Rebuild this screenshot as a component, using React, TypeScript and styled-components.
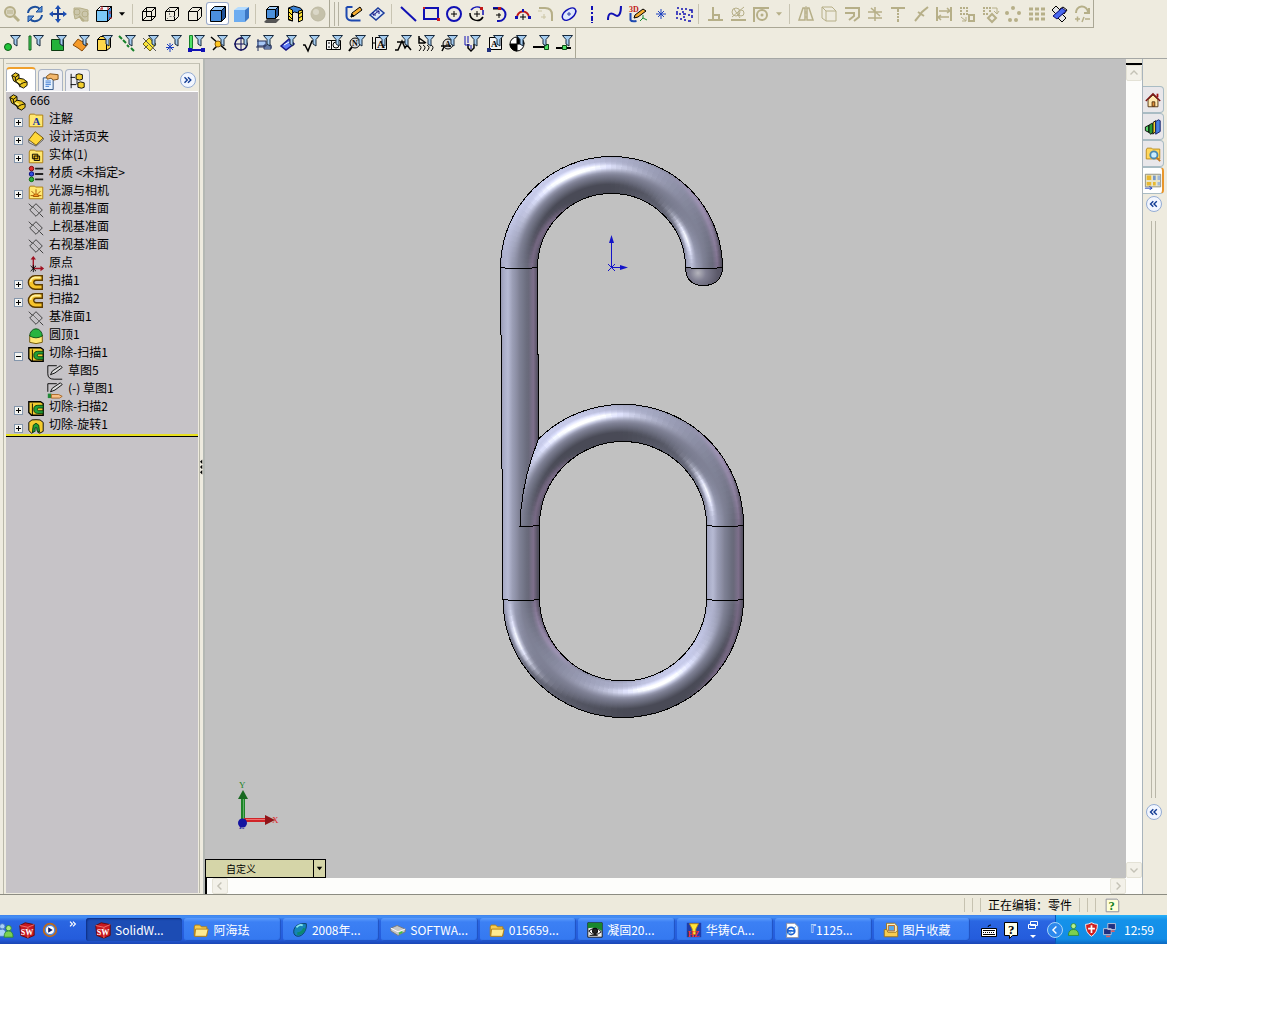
import React from "react";
import styled, { createGlobalStyle, css } from "styled-components";

const GlobalStyle = createGlobalStyle`
  * { box-sizing: border-box; }
  body {
    margin: 0;
    background: #fff;
    font: 12px/18px "Noto Sans CJK SC", "Liberation Sans", sans-serif;
    color: #000;
  }
  button, select { font: inherit; color: inherit; padding: 0; margin: 0; border: 0; background: none; }
  ul { list-style: none; margin: 0; padding: 0; }
`;

/* ---------- icon drawing ---------- */

type Stroke = [d: string, stroke: string, fill?: string, width?: number];
type Glyph = { t: string; x: number; y: number; size: number; color: string };
type Shape = Stroke | Glyph;

const circle = (x: number, y: number, r: number) =>
  `M${x - r} ${y}a${r} ${r} 0 1 0 ${2 * r} 0a${r} ${r} 0 1 0 ${-2 * r} 0z`;

const K = "#000";
const B = "#1010b4";
const G = "#b6af88";
const R = "#c01818";
const none = "none";

const funnel: Shape[] = [["M8.500 2.500h10l-3.500 4v6.500l-3-2v-4.500z", "#16283c", "#a6cdf0"]];
const cube = (front: string, top: string, side: string): Shape[] => [
  ["M2.500 6.500h11v11h-11z", K, front],
  ["M2.500 6.500l4-4h11l-4 4z", K, top],
  ["M13.500 6.500l4-4v11l-4 4z", K, side],
];

const icons: Record<string, Shape[]> = {
  zoom: [[circle(8, 8, 5), G, "#dcd8c4", 2], ["M5 7h6M5 9h6", G], ["M12 12l5 5", G, none, 3]],
  rotate: [
    ["M3 9a7 7 0 0 1 12-4M17 11a7 7 0 0 1-12 4", "#1d4f9c", none, 2],
    ["M17 2v6h-6zM3 18v-6h6z", "#1d4f9c", "#5b94d8"],
  ],
  pan: [["M10 3v14M3 10h14", "#1d3f94", none, 2], ["M10 1l3 4h-6zM10 19l3-4h-6zM1 10l4-3v6zM19 10l-4-3v6z", none, "#1d4fb4"]],
  roll: [["M3 4h6l8 2v11h-6l-2-4-5 2-1-5z", G, "#ccc7ac"], [circle(6, 8, 3), G], [circle(14, 10, 3), G], ["M8 12l5 5", G, none, 2]],
  view: [...cube("#7cc8f8", "#f0f8ff", "#3c8ce0"), ["M8 2v3M6 5h3M14 3v3M16 7v3M15 14h3", R, none, 1]],
  wire: [["M3.500 7.500h9v9h-9zM7.500 3.500h9v9h-9zM3.500 7.500l4-4M12.500 7.500l4-4M12.500 16.500l4-4M3.500 16.500l4-4", K]],
  hidden: [["M3.500 7.500h9v9h-9zM3.500 7.500l4-4h9v9l-4 4M12.500 7.500l4-4", K], ["M7.500 5v2M7.500 9v2M7.500 12.500h2M11 12.500h2M5 15l1-1", "#777"]],
  noline: [["M3.500 7.500h9v9h-9zM3.500 7.500l4-4h9v9l-4 4M12.500 7.500l4-4", K]],
  shadedEdge: cube("#4b8fdc", "#9ccaf8", "#1f5298"),
  shaded: [["M3 6h11v12h-11z", none, "#6cacf0"], ["M3 6l4-3h11l-4 3z", none, "#b4dcff"], ["M14 6l4-3v11l-4 4z", none, "#3d78c4"]],
  shadow: [["M2 18l3-3h13l-4 4h-10z", none, "#555"], ["M4.500 5.500h9v9h-9z", K, "#4b90dc"], ["M4.500 5.500l3-3h9l-3 3z", K, "#a4d0fa"], ["M13.500 5.500l3-3v9l-3 3z", K, "#1f5298"]],
  section: [["M3.500 4l5-2 7 2 2 3v9l-4 1v-8l-4-1-2 1v8l-4-1z", K, "#3b82d4"], ["M3.500 4l4 2v11l-4-2zM13.500 7l4-1v10l-4 2z", K, "#ffe233"], ["M4 8l3 3M4 12l3 3M14 10l3-2M14 14l3-2", K]],
  ball: [[circle(10, 10, 7), "#bdb9a2", "#c5c1aa"], [circle(8, 8, 3), none, "#dad7c7"]],
  sketch: [["M2.500 3v9q0 4 5 4.500h9M2.500 3h6", "#1e49b0", none, 2], ["M7 13l1-4 8-6 2 3-8 6z", K, "#f5ac30"], ["M7 13l1-3 2 2z", K, K]],
  dimension: [["M3 11l8-7 6 5-8 7z", "#1c3c9c", "#dce8f8", 1.500], ["M6 11l6-4M6 11v-3M6 11h3M12 7v3M12 7h-3", "#141484"]],
  line: [["M3 3l15 14", B, none, 2]],
  rect: [["M3 4h14v11h-14z", B, none, 2], ["M16 14h3v3h-3zM2 3h2v2h-2z", none, "#d02020"]],
  circle: [[circle(10, 10, 7), B, none, 2], ["M7 10h6M10 7v6", K]],
  arcCenter: [["M4 6a8 8 0 0 1 10-2M16 6v5", B, none, 1.500], ["M16 13a7 7 0 0 1-13-4", K, none, 1.500], ["M7 10h6M10 7v6", K], ["M13 3h3v3h-3z", none, R]],
  arcTangent: [["M3 4h6a6 6 0 0 1 0 13h-2", B, none, 2], ["M6 11h5M9 9v5M3 5h5", K], ["M8 3h3v3h-3z", none, R]],
  arc3: [["M4 14a6 6 0 0 1 12-1", R, none, 2], ["M7 13h6M10 10v6", K], ["M2 12h3v3h-3zM15 12h3v3h-3zM9 5h2v3h-2z", none, B]],
  fillet: [["M3 4h6q7 0 7 7v6", G, none, 2], ["M5 13h5M8 10v5M2 7h4", "#cbc5a4"]],
  ellipse: [["M4 15c-4-5 8-14 12-10s-7 15-12 10z", B, "#dfe8fc", 1.500], ["M8 10h4M10 8v4", "#3344aa"]],
  centerline: [["M10 2v4M10 8v2M10 12v5M10 18v1", B, none, 2]],
  spline: [["M3 16c0-7 3-8 7-5s6-2 6-9", B, none, 2]],
  sketch3d: [{ t: "3D", x: 1, y: 8, size: 8, color: "#c01818" }, ["M2.500 9v7q1 2 6 1", "#1e49b0", none, 2], ["M6 14l1-3 8-6 3 2-8 6z", K, "#f5ac30"], ["M12 17l3-3 4 2M15 14v-3", "#168a30"]],
  point: [["M10 5v10M5 10h10M7 7l6 6M13 7l-6 6", "#1c40c0"]],
  plane: [["M3 4h2M7 5h2M11 5h2M15 6h3v3M18 11v3M17 17h-3M12 16h-2M8 15h-2M3 15v-2M3 11v-4M5 10h2M9 10h3M14 11h2M9 7v2M10 12v2", B, none, 1.500]],
  perp: [["M3 16h15M8 3v13M8 11h6v5", G, none, 2]],
  relations: [["M3 16h15", G, none, 2], [circle(8, 8, 4), G], [circle(13, 9, 3), G], ["M4 13l12-10M6 5l6 9", G]],
  quick: [["M3 18v-14h15", G, none, 2], [circle(11, 11, 5), G, none, 2], [circle(11, 11, 1.5), none, G]],
  mirror: [["M3 16l4-12h2v12zM17 16l-4-12h-2v12z", G, none, 1.500], ["M10 2v3M10 7v3M10 12v2", G]],
  convert: [["M7 7h10v10h-10zM3 3h10l4 4M3 3v11l4 3M3 3l4 4", G]],
  offset: [["M3 4h14v9l-5 4M3 9h9v3l-5 4", G, none, 2]],
  trim: [["M3 8h14M10 3v14M3 14h14M6 4l9 8", G, none, 1.500]],
  extend: [["M3 4h14", G, none, 2], ["M10 5v3M10 9v2M10 12v2M10 15v3", G, none, 2]],
  split: [["M4 17l5-6 2-3 6-5M7 8l6 4", G, none, 2]],
  linear: [["M3 3v14M17 3v14", G, none, 2], ["M5 7h10M5 13h10M13 4l3 3-3 2M7 11l-3 2 3 3", G, none, 1.500]],
  patternA: [["M3 4h2M6 4h2M9 4h2M3 7h2M9 7h2M3 10h2M6 10h2M9 10h2", G, none, 2], ["M12 11h5v6h-5z", G, none, 2], ["M4 13l5 4v-4M9 17h-4", G]],
  patternB: [["M3 4h2M6 4h2M9 4h2M3 7h2M9 7h2M3 10h2M6 10h2", G, none, 2], ["M12 10l4 4-4 4-4-4z", G, none, 2], ["M12 4h5v5M14 7l3 3 2-3", G]],
  circular: [[circle(10, 4, 2), none, G], [circle(4, 9, 2), none, G], [circle(16, 9, 2), none, G], [circle(7, 16, 2), none, G], [circle(13, 16, 2), none, G]],
  grid: [["M3 5h4M9 5h4M15 5h4M3 10h4M9 10h4M15 10h4M3 15h4M9 15h4M15 15h4", G, none, 3]],
  move: [["M3 6l4-4 4 4-4 4zM9 14l4 4 4-4-4-4zM11 5l3-2 4 3-3 4z", K, "#e6e6e6"], ["M4 12l9-8 4 3-9 8z", "#101074", "#4868f0"]],
  modify: [["M4 9a6 6 0 0 1 12-1M17 4v5h-5", G, none, 2], ["M3 15h5M5.500 12.500v5M12 13l-2 5M13 15h5", G, none, 1.500]],

  fVertex: [[circle(6, 14, 3.500), "#0a5a14", "#22c43a"], ...funnel],
  fEdge: [["M4 3h2v14h-2z", "#0a5a14", "#4fe066"], ...funnel],
  fFace: [["M3.500 6.500h12v11h-12z", "#0a3a10", "#22b23a"], ...funnel],
  fSurface: [["M2 12l5-6 3 2 7 3-6 7-4-3z", "#8a4a08", "#f59a28"], ...funnel],
  fSolid: [["M3.500 6.500h9v11h-9zM3.500 6.500l3-3h11l-5 3zM12.500 6.500l4-3v11l-4 3z", K, "#ffd84a"], ...funnel],
  fAxis: [["M2 3l3 3M6 7l3 3M10 12l2 2M14 15l3 3", "#16802a", none, 2], ...funnel],
  fPlane: [["M3 11l6-6 7 6-6 7z", "#6a6010", "#fbe63a"], ["M3 5l13 13M4 16l4-4", "#555"], ...funnel],
  fPoint: [["M7 10v9M3 14.500h8M4 11l6 6M10 11l-6 6", "#1c40c0"], ...funnel],
  fSketch: [["M3.500 2.500h3v13h-3z", "#16802a", "#4fe066"], ["M4 17h12", B, none, 2], ["M2 15h4v4h-4zM15 15h4v4h-4z", none, B], ...funnel],
  fSegment: [["M2 4l15 13M4 17l7-7", K, none, 1.500], [circle(9, 11, 3), "#8a5a08", "#ffc820"], ...funnel],
  fCenter: [[circle(9, 11, 6), "#10105c", none, 1.500], ["M2 11h14M9 4v14", "#10105c"], ...funnel],
  fMid: [["M3 6v12M2 8h9v5h-9M9 12h7v4h-7zM1 14h16", "#24305c", "#a8c8f4"], ...funnel],
  fDim: [["M3 13l8-7 5 5-8 6z", "#141484", "#5f7af4", 1.500], ["M6 12l5-3", "#fff"], ...funnel],
  fFinish: [["M2 12h2l3 6 4-10h3", K, none, 1.500], ...funnel],
  fTol: [["M2.500 7.500h14v9h-14zM7.500 7.500v9", K, "#f4f4f4"], [circle(12, 12, 3), K], ["M4 10h2M4 14h2", K], ...funnel],
  fNote: [[circle(8, 10, 5), K, "#ddd"], ["M5 14l-3 4", K, none, 2], { t: "N", x: 5, y: 13, size: 8, color: "#000" }, ...funnel],
  fDatum: [["M5.500 4.500h11v12h-11zM2.500 4v12M2 10h4", K, "#e8e8e8"], { t: "A", x: 7, y: 15, size: 11, color: "#000" }, ...funnel],
  fWeld: [["M2 17h3l4-9 3 7 2-3 4 5M4 9h8", K, none, 1.500], ...funnel],
  fCosmetic: [["M3 3v7h6M3 5l7 5", K, none, 1.500], ["M3 12q4 2 0 6M7 12q4 2 0 6M11 12q4 2 0 6M15 12q4 2 0 6", K], ...funnel],
  fBalloon: [[circle(9, 11, 5), K, "#ddd"], ["M5 14l-2 4M2 13h10", K, none, 1.500], { t: "A", x: 6, y: 14, size: 8, color: "#000" }, ...funnel],
  fThread: [["M6 11v4l3 3 3-3v-4", K, none, 1.500], ["M3 3v9h5M6 3v7M9 12v4", B], ...funnel],
  fTarget: [["M4.500 4.500h12v12h-12z", K, "#f4f4f4"], { t: "A", x: 6, y: 14, size: 9, color: "#000" }, ["M2 15h4v4h-4z", none, "#203080"], ...funnel],
  fMass: [[circle(9, 11, 7), K, "#fff"], ["M9 4v7h7a7 7 0 0 0-7-7M9 11v7a7 7 0 0 1-7-7z", K, K], ...funnel],
  fRoute: [["M2 14h13", K, none, 2], ["M13.500 11.500h4v5h-4z", "#0a4a14", "#4fe066"], ...funnel],
  fConnect: [["M2 15h15", K, none, 2], ["M8.500 12.500h4v4h-4z", "#0a4a14", "#4fe066"], ...funnel],

  part: [["M2 5l4-3 4 2v4l5 1 4 3v4l-4 3-4-2-2-3-5-3z", K, "#e8c420"], ["M2 5l4 2 4-3M6 7v4l5 4 4-2 4-1M11 15v3M10 8l-4 3", K], ["M8 11l4 2", "#fff27a", none, 2]],
  property: [["M2.500 6.500h11v13h-11z", "#23487c", "#e6f2ff"], ["M5 10h6M5 12h6M5 14h6M5 16h4", "#3a78d0"], ["M6 5l4-3 9 1v5l-5 1-3-2-4 1z", "#7a4a10", "#f3b76c"]],
  config: [["M3.500 2v16M3 6h5M3 14h6M10 9v5", K, none, 1], ["M9 3l3-1 4 1v5l-3 1-4-1zM11 12l3-1 4 1v5l-3 1-4-1z", K, "#f4d030"]],
  folderA: [["M2.500 5.500l1-2h5l1 1h8v13h-15z", "#a87808", "#ffe770"], { t: "A", x: 6, y: 16, size: 12, color: "#1838a0" }],
  binder: [["M2 12v3l8 4 8-7v-2", "#555", "#ddd"], ["M2 12l7-9 9 7-8 8z", "#6a4c00", "#ffd838"]],
  folderSolid: [["M2.500 5.500l1-2h5l1 1h8v13h-15z", "#a87808", "#ffe770"], ["M6 8h6v5h-6zM8 10h6v5h-6z", K, "#e8b820"]],
  material: [[circle(5, 4, 2.500), "#700", "#e03030"], [circle(5, 10, 2.500), "#007", "#3050e0"], [circle(5, 16, 2.500), "#060", "#30b040"], ["M9 4h9M9 10h9M9 16h9", "#222", none, 2]],
  folderLight: [["M2.500 5.500l1-2h5l1 1h8v13h-15z", "#a87808", "#ffe770"], ["M7 15a3 3 0 0 1 6 0zM10 7v4M5 9l3 3M15 9l-3 3M4 14h3M13 14h3", "#a04c00", "#f8a020"]],
  refPlane: [["M3 10l7-7 7 7-7 7zM2 3l4 4M14 14l4 4", "#333"], ["M6 6l8 8", "#666"]],
  origin: [["M7 15v-12M7 15h10", "#a01020", none, 1.500], ["M7 1l3 4h-6zM19 15l-4-3v6z", none, "#a01020"], ["M4 12l6 6M10 12l-6 6M7 11v8", K]],
  sweep: [["M17 3h-8a7 7 0 0 0 0 15h8v-5h-7a2.500 2.500 0 0 1 0-5h7z", "#5a3a00", "#f6c42c", 1.500], ["M15 5h-6a5 5 0 0 0-5 5", "#fff09a", none, 2]],
  dome: [["M3 9h14v8q-7 3-14 0z", "#6a5000", "#ffe774"], ["M3 10a7 8 0 0 1 14 0q-7 4-14 0z", "#0a4a14", "#28b440"]],
  cutSweep: [["M2 3h13l3 2v13h-13l-3-3z", K, "#f4cc30", 1.500], ["M6 5v13", K], ["M18 7h-6a4.500 4.500 0 0 0 0 9h6v-3h-5a1.500 1.500 0 0 1 0-3h5z", "#063a0c", "#22a038"]],
  sketchItem: [["M2 3v9q0 6 7 6h9M2 3h10", K], ["M5 13l2-4 9-6 2 2-8 6z", K, "#ddd"]],
  sketchShared: [["M2 3v9M2 3h10", K], ["M5 12l2-4 9-6 2 2-8 6z", K, "#ddd"], ["M2 14h4v5h-4z", none, "#208838"], ["M6 15h8l4 2-3 2h-9z", "#a86420", "#f8c088"]],
  cutRevolve: [["M2 6q3-4 8-3 5-1 8 3v10l-4 2-2-1v-5l-2-2-3 2v5l-2 1-3-3z", K, "#f4cc30"], ["M6 17l1-8 3-2 3 2 1 8-3-2v-3h-2v4z", "#063a0c", "#22a038"]],
  house: [["M4.500 9.500l5.500-5 5.500 5v8h-11z", "#503010", "#ffe8b0"], ["M2 11l8-8 8 8", "#7a1010", none, 1.500], ["M9 12h3v5h-3z", "#503010", "#e09038"], ["M14 3h2v4h-2z", none, "#a01010"]],
  library: [["M1.500 10l4-2v8l-4-2z", K, "#58d068"], ["M5.500 8l3-2 2 1v9l-3 2-2-2z", K, "#2a9838"], ["M10 5l3-2v12l-3 3z", K, "#f4d030"], ["M13 4l3-2 2 1v12l-5 3z", "#101860", "#4880e0"]],
  explorer: [["M2.500 5.500l1-2h5l1 1h8v11h-15z", "#b88818", "#ffd75c"], [circle(11, 11, 4), "#4888b0", "#c8ecff", 2], ["M14 14l4 4", "#c07820", none, 2]],
  palette: [["M1.500 2.500h17v14h-17z", "#8a8a78", "#e8e4c8"], ["M3 4h5v5h-5zM3 11h5v4h-5zM10 11h3v4h-3z", none, "#e8b830"], ["M10 4h3v5h-3z", none, "#7898c8"], ["M15 4h3v5h-3zM15 11h3v4h-3z", none, "#a0b8d8"], ["M1 18h8M6 16l3 2-3 2", "#1c40c0"]],

  people: [[circle(7, 6, 3), "#4878c0", "#a8d0f8"], ["M2 17q0-8 5-8 4 0 5 8z", "#4878c0", "#a8d0f8"], [circle(14, 8, 3), "#2a8838", "#a8e878"], ["M9 18q0-7 5-7t5 7z", "#2a8838", "#7cd050"]],
  sw: [["M2 5l6-3 10 2v12l-7 3-8-3z", "#600808", "#c81820"], ["M2 5l9 2 7-3M11 7v12", "#f07870"], { t: "SW", x: 3, y: 15, size: 9, color: "#fff" }],
  media: [[circle(10, 10, 7), "#b86820", "#4c8ce8", 2], [circle(10, 10, 4.500), none, "#fff"], ["M8 7l5 3-5 3z", none, "#101a60"]],
  folder: [["M2.500 6.500l1-2h5l2 2h6v10h-14z", "#b07c10", "#f8cc50"], ["M4 9h14l-2 8h-13z", "#b07c10", "#ffea90"]],
  globe: [["M3 12c0-7 7-10 14-9 1 7-4 14-9 14-3 0-5-2-5-5z", "#0c3c60", "#1484b8"], ["M6 7q4-4 7-2", "#88e8f0", none, 2], ["M7 14q6 0 8-6", "#0c8870", none, 3]],
  drive: [["M2 8l7-3 9 4v3l-8 4-8-5z", "#777", "#c8c8c8"], ["M2 8l8 4 8-3", "#fff"], ["M11 14l4-2", "#40c040", none, 2]],
  eye: [["M2 2h16v16h-16z", "#111", "#eee"], ["M2 2h16v9q-7-5-16-3z", none, "#18882c"], ["M3 11q8-6 14 1-6 5-11 2z", K, "#fff"], [circle(10, 11, 3), K, "#222"], ["M4 16h9", K]],
  cast: [["M2 2h16v16h-16z", none, "#203ca8"], ["M5 3h10l-3 6v6h-4v-6z", "#b88818", "#ffe43a"], { t: "HZ", x: 3, y: 18, size: 9, color: "#f03030" }],
  ie: [["M4 2.500h9l4 4v12h-13z", "#889", "#fff"], [circle(9, 11, 4), "#1c60d0", none, 2], ["M5 11h8", "#1c60d0", none, 2], ["M3 15q8-2 11-9", "#48a0f0"]],
  pictures: [["M5 2.500h9l3 3v9h-12z", "#98701c", "#fff4c0"], ["M7 5h7v6h-7z", "#c86818", "#58a8e8"], ["M2.500 9.500h3l1 3h9l2-2v7h-15z", "#98701c", "#f8cc50"]],
  keyboard: [["M2.500 8.500h15v8h-15z", K, "#fff"], ["M4 10.500h12M4 14.500h12M9 7q0-2 3-2", K], ["M4 12.500h1M6 12.500h1M8 12.500h1M10 12.500h1M12 12.500h1M14 12.500h1", K]],
  helpBubble: [["M3.500 2.500h13v13h-5l-3 3v-3h-5z", K, "#ffffe8"], { t: "?", x: 7, y: 14, size: 13, color: "#000" }],
  restore: [["M7.500 1.500h7v4h-7zM5.500 4.500h7v4h-7z", "#fff", "#2a62dc"], ["M7 15h6l-3 3z", none, "#fff"]],
  buddy: [[circle(10, 6, 3), "#2a8838", "#b8f090"], ["M4 17q0-7 6-7t6 7z", "#2a8838", "#7cd050"]],
  shield: [["M10 2q4 2 7 2 0 10-7 14-7-4-7-14 3 0 7-2z", "#fff", "#d02020"], ["M10 5v9M6 9h8", "#fff", none, 2]],
  network: [["M8 3h9v7h-9zM3 9h9v7h-9z", "#ccd", "#203080"], ["M6 18h5M12 12h4", "#e06060", none, 2]],
  help: [["M3.500 3.500h12l2 2v12h-14z", "#889", "#ffffd8"], { t: "?", x: 6, y: 16, size: 14, color: "#128020" }],
  prev: [["M12 5l-5 5 5 5", "currentColor", none, 2]],
  next: [["M8 5l5 5-5 5", "currentColor", none, 2]],
  up: [["M5 12l5-5 5 5", "currentColor", none, 2]],
  down: [["M5 8l5 5 5-5", "currentColor", none, 2]],
  dblNext: [["M5 6l4 4-4 4M10 6l4 4-4 4", "currentColor", none, 2]],
  dblPrev: [["M9 6l-4 4 4 4M14 6l-4 4 4 4", "currentColor", none, 2]],
  caret: [["M5 7h10l-5 6z", none, "currentColor"]],
};

const Svg = styled.svg<{ $size: number }>`
  display: block;
  flex: none;
  width: ${(p) => p.$size}px;
  height: ${(p) => p.$size}px;
`;

function Icon({ name, size = 20 }: { name: string; size?: number }) {
  return (
    <Svg $size={size} viewBox="0 0 20 20" aria-hidden="true">
      {icons[name].map((s, i) =>
        Array.isArray(s) ? (
          <path key={i} d={s[0]} stroke={s[1]} fill={s[2] ?? "none"} strokeWidth={s[3] ?? 1} />
        ) : (
          <text key={i} x={s.x} y={s.y} fontSize={s.size} fill={s.color} fontWeight="700" fontFamily="Liberation Serif, serif">
            {s.t}
          </text>
        )
      )}
    </Svg>
  );
}

/* ---------- window frame ---------- */

const Page = styled.div`
  display: flex;
  height: 100vh;
  padding: 0 113px 80px 0;
`;
const Window = styled.div`
  flex: 1;
  min-width: 0;
  display: flex;
  flex-direction: column;
  background: #eeebdf;
`;

/* ---------- toolbars ---------- */

const ToolArea = styled.header`
  flex: none;
  border-bottom: 1px solid #a5a7a5;
  overflow: hidden;
`;
const ToolRow = styled.div<{ $height: number }>`
  display: flex;
  height: ${(p) => p.$height}px;
`;
const Bar = styled.div<{ $line?: boolean }>`
  display: flex;
  align-items: center;
  flex: none;
  border-right: 1px solid #aaa795;
  ${(p) => p.$line && css`border-bottom: 1px solid #aaa795;`}
`;
const ToolButton = styled.button<{ $active?: boolean }>`
  display: flex;
  align-items: center;
  justify-content: center;
  width: 23px;
  height: 23px;
  border-radius: 3px;
  ${(p) => p.$active && css`background: #fff; box-shadow: inset 0 0 0 1px #98a8c8;`}
`;
const DropButton = styled.button<{ $dim?: boolean }>`
  display: flex;
  justify-content: center;
  width: 14px;
  color: ${(p) => (p.$dim ? "#b6af88" : "#000")};
`;
const Separator = styled.span`
  width: 1px;
  height: 20px;
  margin: 0 4px 0 3px;
  background: #c8c4b2;
`;
const Grip = styled.span`
  width: 5px;
  height: 24px;
  margin: 0 3px 0 4px;
  border: solid #b5b2a2;
  border-width: 0 1px;
`;

const commands = "zoom rotate pan roll view v | wire hidden noline shadedEdge shaded | shadow section ball".split(" ");
const sketchTools =
  "sketch dimension | line rect circle arcCenter arcTangent arc3 fillet ellipse centerline spline sketch3d point plane | perp relations quick d | mirror convert offset trim extend split linear patternA patternB circular grid move modify".split(" ");
const filters =
  "fVertex fEdge fFace fSurface fSolid fAxis fPlane fPoint fSketch fSegment fCenter fMid fDim fFinish fTol fNote fDatum fWeld fCosmetic fBalloon fThread fTarget fMass fRoute fConnect".split(" ");

function Tools({ names }: { names: string[] }) {
  return (
    <>
      {names.map((n, i) => {
        if (n === "|") return <Separator key={i} />;
        if (n === "v" || n === "d")
          return (
            <DropButton key={i} $dim={n === "d"} aria-label="more">
              <Icon name="caret" size={12} />
            </DropButton>
          );
        return (
          <ToolButton key={i} $active={n === "shadedEdge"} aria-label={n}>
            <Icon name={n} />
          </ToolButton>
        );
      })}
    </>
  );
}

/* ---------- feature tree ---------- */

const Workspace = styled.main`
  flex: 1;
  min-height: 0;
  display: flex;
  border-bottom: 1px solid #8c8c82;
`;
const LeftEdge = styled.div`
  width: 4px;
  border-right: 1px solid #b9b8aa;
`;
const TreePanel = styled.aside`
  width: 196px;
  display: flex;
  flex-direction: column;
  padding: 4px 0 1px 2px;
`;
const TreeFrame = styled.div`
  flex: 1;
  display: flex;
  flex-direction: column;
  padding-right: 1px;
  border-top: 1px solid #c4c2b4;
  border-right: 1px solid #b9b8aa;
`;
const TabBar = styled.div`
  display: flex;
  align-items: flex-end;
  gap: 2px;
  height: 28px;
  padding-right: 2px;
  border-bottom: 1px solid #fff;
`;
const Tab = styled.button<{ $active?: boolean }>`
  display: flex;
  align-items: center;
  justify-content: center;
  width: ${(p) => (p.$active ? 30 : 25)}px;
  height: ${(p) => (p.$active ? 24 : 22)}px;
  padding-right: ${(p) => (p.$active ? 4 : 2)}px;
  border: 1px solid #aab4c4;
  border-bottom: 0;
  border-radius: 4px 4px 0 0;
  background: ${(p) => (p.$active ? "#fff" : "#eeeef2")};
  ${(p) => p.$active && css`border-top: 2px solid #f0a02c;`}
`;
const RoundButton = styled.button`
  display: flex;
  align-items: center;
  justify-content: center;
  width: 16px;
  height: 16px;
  border: 1px solid #94acd4;
  border-radius: 50%;
  background: #f2f6ff;
  color: #123c94;
`;
const PanelToggle = styled(RoundButton)`
  margin: 0 0 3px auto;
`;
const Tree = styled.ul`
  flex: 1;
  background: #c6c3c7;
`;
const Row = styled.li<{ $level: number }>`
  display: flex;
  align-items: center;
  gap: 4px;
  height: 18px;
  padding-left: ${(p) => [2, 8, 40][p.$level]}px;
  white-space: pre;
`;
const TreeIcon = styled.span`
  display: flex;
  padding-top: 2px;
`;
const Label = styled.span`
  padding-bottom: 2px;
`;
const Expander = styled.button`
  display: flex;
  align-items: center;
  justify-content: center;
  width: 9px;
  height: 9px;
  margin: 6px 0 0;
  border: 1px solid #8496ac;
  background: #f4f4f0;
`;
const NoExpander = styled.span`
  width: 9px;
`;
const RollbackBar = styled.li`
  height: 3px;
  background: #e8e020;
  border-bottom: 1px solid #000;
`;

type Node = [level: number, icon: string, label: string, open?: "+" | "-"];
const nodes: Node[] = [
  [0, "part", "666"],
  [1, "folderA", "注解", "+"],
  [1, "binder", "设计活页夹", "+"],
  [1, "folderSolid", "实体(1)", "+"],
  [1, "material", "材质 <未指定>"],
  [1, "folderLight", "光源与相机", "+"],
  [1, "refPlane", "前视基准面"],
  [1, "refPlane", "上视基准面"],
  [1, "refPlane", "右视基准面"],
  [1, "origin", "原点"],
  [1, "sweep", "扫描1", "+"],
  [1, "sweep", "扫描2", "+"],
  [1, "refPlane", "基准面1"],
  [1, "dome", "圆顶1"],
  [1, "cutSweep", "切除-扫描1", "-"],
  [2, "sketchItem", "草图5"],
  [2, "sketchShared", "(-) 草图1"],
  [1, "cutSweep", "切除-扫描2", "+"],
  [1, "cutRevolve", "切除-旋转1", "+"],
];

const Splitter = styled.div`
  display: flex;
  align-items: center;
  width: 5px;
  padding-bottom: 20px;
  border-right: 2px solid #b4b8b4;
`;

/* ---------- model view ---------- */

const ViewColumn = styled.section`
  flex: 1;
  min-width: 0;
  display: flex;
  flex-direction: column;
`;
const Viewport = styled.div`
  flex: 1;
  min-height: 0;
  position: relative;
  background: #c1c1c1;
`;
const Scene = styled.svg`
  position: absolute;
  inset: 0;
  width: 100%;
  height: 100%;
`;
const ViewSelect = styled.div`
  position: absolute;
  left: 0;
  bottom: 0;
  display: flex;
  width: 121px;
  height: 19px;
  border: 1px solid #000;
  background: #d5d5a8;
`;
const Select = styled.select`
  appearance: none;
  flex: 1;
  padding-left: 20px;
  font-size: 10px;
  line-height: 17px;
  border-right: 1px solid #000;
  border-radius: 0;
`;
const SelectArrow = styled.span`
  display: flex;
  align-items: center;
  width: 11px;
`;
const HScroll = styled.div`
  flex: none;
  display: flex;
  justify-content: space-between;
  height: 16px;
  padding-left: 5px;
  border-left: 2px solid #000;
  background: #fdfdfb;
`;
const VScroll = styled.div`
  flex: none;
  display: flex;
  flex-direction: column;
  justify-content: space-between;
  width: 16px;
  padding-bottom: 16px;
  background: #fdfdfb;
`;
const SplitBox = styled.div`
  height: 6px;
  border-bottom: 2px solid #000;
  background: #eeebdf;
`;
const ScrollButton = styled.button`
  display: flex;
  align-items: center;
  justify-content: center;
  width: 16px;
  height: 16px;
  border: 1px solid #e4e2d6;
  border-radius: 2px;
  background: #f3f1e9;
  color: #c4c2b6;
`;

/* Surface colour of the tube for a unit normal (x right, y up, z to the viewer). */
function shade(nx: number, ny: number): string {
  const nz = Math.sqrt(Math.max(0, 1 - nx * nx - ny * ny));
  const diffuse = 0.36 + 0.54 * Math.max(0, -0.35 * nx + 0.8 * ny + 0.48 * nz) + 0.2 * Math.max(0, -nx);
  const top = Math.pow(Math.max(0, -0.16 * nx + 0.42 * ny + 0.893 * nz), 36) * 105;
  const side = Math.pow(Math.max(0, -0.6 * nx - 0.26 * ny + 0.755 * nz), 50) * 120;
  const violet = Math.exp(-Math.pow((nx - 0.76) / 0.18, 2)) * 46;
  const mix = [202, 206, 238].map((c, i) =>
    Math.round(Math.min(255, c * diffuse + top + side + violet * [1, 0.66, 1][i]))
  );
  return `rgb(${mix.join(",")})`;
}

const offsets = Array.from({ length: 17 }, (_, i) => -1 + i / 8);

function Bend({ id, cx, cy, inner, outer, from }: { id: string; cx: number; cy: number; inner: number; outer: number; from: number }) {
  const count = 60;
  const step = Math.PI / count;
  const wedges = Array.from({ length: count }, (_, i) => from + i * step);
  const pt = (r: number, a: number) => `${(cx + r * Math.cos(a)).toFixed(2)} ${(cy - r * Math.sin(a)).toFixed(2)}`;
  return (
    <g shapeRendering="crispEdges">
      {wedges.map((a, i) => {
        const mid = a + step / 2;
        const end = i === count - 1 ? a + step : a + step * 1.3;
        return (
          <React.Fragment key={i}>
            <radialGradient id={`${id}${i}`} gradientUnits="userSpaceOnUse" cx={cx} cy={cy} r={outer}>
              {offsets.map((s) => (
                <stop
                  key={s}
                  offset={(inner + ((s + 1) / 2) * (outer - inner)) / outer}
                  stopColor={shade(s * Math.cos(mid), s * Math.sin(mid))}
                />
              ))}
            </radialGradient>
            <path
              fill={`url(#${id}${i})`}
              d={`M${pt(inner, a)}L${pt(outer, a)}A${outer} ${outer} 0 0 0 ${pt(outer, end)}L${pt(inner, end)}A${inner} ${inner} 0 0 1 ${pt(inner, a)}z`}
            />
          </React.Fragment>
        );
      })}
    </g>
  );
}

function TubeGradient({ id, x1, x2 }: { id: string; x1: number; x2: number }) {
  return (
    <linearGradient id={id} gradientUnits="userSpaceOnUse" x1={x1} x2={x2} y1={0} y2={0}>
      {offsets.map((s) => (
        <stop key={s} offset={(s + 1) / 2} stopColor={shade(s, 0)} />
      ))}
    </linearGradient>
  );
}

function Model() {
  return (
    <Scene viewBox="205 59 921 819" preserveAspectRatio="xMidYMid meet" role="img" aria-label="666">
      <defs>
        <TubeGradient id="post" x1={501} x2={538} />
        <TubeGradient id="side" x1={706} x2={743} />
        <radialGradient id="tip" gradientUnits="userSpaceOnUse" cx={698} cy={273} r={20}>
          <stop offset="0" stopColor="#b4b4bc" />
          <stop offset=".4" stopColor="#807f92" />
          <stop offset="1" stopColor="#5a5868" />
        </radialGradient>
      </defs>
      <Bend id="hook" cx={611} cy={267.500} inner={74} outer={111} from={0} />
      <Bend id="upper" cx={623} cy={525} inner={83.500} outer={120.500} from={0} />
      <Bend id="lower" cx={623} cy={598} inner={83.500} outer={120} from={Math.PI} />
      <path d="M706 525h37.500v75h-37.500z" fill="url(#side)" />
      <path d="M500.500 267h37l1 172Q521 482 520 525h19.500v75h-36.500z" fill="url(#post)" />
      <path d="M685.500 268h37q-1 17-18.500 17.500t-18.500-17.500z" fill="url(#tip)" />
      <g fill="none" stroke="#000" strokeWidth="1" shapeRendering="crispEdges">
        <path d="M500.500 268a111 111.500 0 0 1 222 0q-1 17-18.500 17.500t-18.500-17.500a74 74.500 0 0 0-148 0l1 171A120.500 120.500 0 0 1 743.500 525v73A120.500 119.500 0 0 1 623 717.500A120 117.500 0 0 1 503 600z" />
        <path d="M539.500 525a83.500 83.500 0 0 1 167 0v73a83.500 83 0 0 1-167 0z" />
        <path d="M538.500 439Q521 482 520 526.500l10 0 9-1.500M500 267.500l10 1h18l9-1M686 267.500l9 1h18l9-1M503 599.500l9 1h18l9-1M707 525.500l9 1h18l9-1M707 599.500l9 1h18l9-1" />
      </g>
      <g stroke="#1414c8" fill="#1414c8">
        <path d="M611.500 267v-28M611 267.500h12M608 264l7 7M615 264l-7 7" />
        <path d="M611.500 235l2.500 8h-5zM628 267.500l-8-2.500v5z" stroke="none" />
      </g>
      <path d="M243 820v-26" stroke="#1d8428" strokeWidth="4" />
      <path d="M243.500 794v26" stroke="#60b068" />
      <path d="M243 790l5 9h-10z" fill="#176820" />
      <path d="M244 820h25" stroke="#d02428" strokeWidth="4" />
      <path d="M246 819.500h20" stroke="#f07070" />
      <path d="M275 820l-10-5v10z" fill="#901418" />
      <circle cx="242.500" cy="823" r="4.500" fill="#1414a0" />
      <g fontFamily="Liberation Serif, serif" fontSize="9">
        <text x="239" y="788" fill="#1d8428">Y</text>
        <text x="272" y="823" fill="#e02428">X</text>
        <text x="239" y="829" fill="#1414a0">Z</text>
      </g>
    </Scene>
  );
}

/* ---------- task pane ---------- */

const TaskPane = styled.aside`
  display: flex;
  flex-direction: column;
  align-items: center;
  width: 25px;
  padding: 27px 3px 74px 0;
  border-left: 1px solid #a9b4bc;
`;
const PaneTab = styled.button<{ $active?: boolean }>`
  display: flex;
  align-items: center;
  justify-content: center;
  align-self: flex-start;
  width: 21px;
  height: 27px;
  border: 1px solid #a9bcc4;
  border-left: 0;
  border-radius: 0 4px 4px 0;
  background: ${(p) => (p.$active ? "#fff" : "#e9e7ea")};
  ${(p) => p.$active && css`border-right: 2px solid #e8962c;`}
`;
const PaneGrip = styled.span`
  flex: 1;
  width: 5px;
  margin: 9px 0 6px;
  border: solid #b9b6a8;
  border-width: 0 1px;
`;
const PaneToggle = styled(RoundButton)`
  margin-top: 2px;
`;

/* ---------- status bar and taskbar ---------- */

const StatusBar = styled.footer`
  flex: none;
  display: flex;
  align-items: center;
  justify-content: flex-end;
  gap: 7px;
  height: 20px;
  padding-right: 46px;
  background: #edeadc;
`;
const StatusMark = styled.span`
  width: 1px;
  height: 14px;
  background: #c6c2b0;
`;
const Taskbar = styled.nav`
  flex: none;
  display: flex;
  height: 29px;
  color: #fff;
  background: linear-gradient(#3c82ee 0, #4690f4 2px, #2a66e2 6px, #245cdc 24px, #1a46b4 29px);
`;
const QuickLaunch = styled.div`
  display: flex;
  align-items: center;
  gap: 3px;
  width: 86px;
  overflow: hidden;
`;
const QuickButton = styled.button`
  display: flex;
  align-items: center;
  justify-content: center;
  flex: none;
  width: 20px;
  &:first-child { width: 14px; justify-content: flex-end; }
`;
const Chevron = styled(QuickButton)`
  align-self: flex-start;
  margin-top: 3px;
`;
const TaskList = styled.div`
  flex: 0 1 886px;
  min-width: 0;
  display: flex;
  gap: 2px;
  padding: 3px 2px 0 0;
`;
const TaskButton = styled.button<{ $active?: boolean }>`
  flex: 1 1 0;
  min-width: 0;
  display: flex;
  align-items: center;
  gap: 3px;
  height: 23px;
  padding-left: 8px;
  border-radius: 3px;
  white-space: nowrap;
  background: ${(p) => (p.$active ? "#1c4cb4" : "linear-gradient(#5c9cfc, #3c80f4 4px, #3478f0)")};
  box-shadow: ${(p) => (p.$active ? "inset 1px 1px 2px #0c2c80" : "inset -1px -1px 1px #2050c0")};
`;
const LanguageBar = styled.div`
  display: flex;
  align-items: center;
  gap: 2px;
  margin-left: auto;
  padding-right: 12px;
`;
const Tray = styled.div`
  display: flex;
  align-items: center;
  width: 112px;
  border-left: 1px solid #0c58b8;
  background: linear-gradient(#28b0f8, #1492ea 5px, #128ce6 24px, #0c68c0);
`;
const TrayToggle = styled(RoundButton)`
  margin: 0 2px 0 -9px;
  border-color: #a8d4f8;
  background: #2c88ec;
  color: #fff;
`;
const TrayIcons = styled.div`
  display: flex;
  gap: 1px;
`;
const Clock = styled.time`
  margin-left: 6px;
`;

const tasks: [string, string][] = [
  ["sw", "SolidW..."],
  ["folder", "阿海珐"],
  ["globe", "2008年..."],
  ["drive", "SOFTWA..."],
  ["folder", "015659..."],
  ["eye", "凝固20..."],
  ["cast", "华铸CA..."],
  ["ie", "『1125..."],
  ["pictures", "图片收藏"],
];

export default function App() {
  return (
    <Page>
      <GlobalStyle />
      <Window>
        <ToolArea>
          <ToolRow $height={28}>
            <Bar $line>
              <Tools names={commands} />
            </Bar>
            <Bar $line>
              <Grip />
              <Tools names={sketchTools} />
            </Bar>
          </ToolRow>
          <ToolRow $height={30}>
            <Bar>
              <Tools names={filters} />
            </Bar>
          </ToolRow>
        </ToolArea>

        <Workspace>
          <LeftEdge />
          <TreePanel>
            <TreeFrame>
              <TabBar>
                <Tab $active aria-label="feature tree"><Icon name="part" size={18} /></Tab>
                <Tab aria-label="properties"><Icon name="property" size={18} /></Tab>
                <Tab aria-label="configurations"><Icon name="config" size={18} /></Tab>
                <PanelToggle aria-label="expand"><Icon name="dblNext" size={14} /></PanelToggle>
              </TabBar>
              <Tree>
                {nodes.map(([level, icon, label, open], i) => (
                  <Row key={i} $level={level}>
                    {level === 1 &&
                      (open ? (
                        <Expander aria-label={label}>
                          <svg width="7" height="7" viewBox="0 0 7 7">
                            <path d={open === "+" ? "M1 3.500h5M3.500 1v5" : "M1 3.500h5"} stroke="#000" />
                          </svg>
                        </Expander>
                      ) : (
                        <NoExpander />
                      ))}
                    <TreeIcon><Icon name={icon} size={18} /></TreeIcon>
                    <Label>{label}</Label>
                  </Row>
                ))}
                <RollbackBar />
              </Tree>
            </TreeFrame>
          </TreePanel>
          <Splitter>
            <svg width="4" height="20" viewBox="0 0 4 20">
              <path d="M3 0v6l-3-3zM3 7v6l-3-3zM3 14v6l-3-3z" />
            </svg>
          </Splitter>

          <ViewColumn>
            <Viewport>
              <Model />
              <ViewSelect>
                <Select aria-label="view">
                  <option>自定义</option>
                </Select>
                <SelectArrow><Icon name="caret" size={11} /></SelectArrow>
              </ViewSelect>
            </Viewport>
            <HScroll>
              <ScrollButton aria-label="scroll left"><Icon name="prev" size={14} /></ScrollButton>
              <ScrollButton aria-label="scroll right"><Icon name="next" size={14} /></ScrollButton>
            </HScroll>
          </ViewColumn>
          <VScroll>
            <div>
              <SplitBox />
              <ScrollButton aria-label="scroll up"><Icon name="up" size={14} /></ScrollButton>
            </div>
            <ScrollButton aria-label="scroll down"><Icon name="down" size={14} /></ScrollButton>
          </VScroll>
          <TaskPane>
            <PaneTab aria-label="home"><Icon name="house" size={18} /></PaneTab>
            <PaneTab aria-label="library"><Icon name="library" size={18} /></PaneTab>
            <PaneTab aria-label="explorer"><Icon name="explorer" size={18} /></PaneTab>
            <PaneTab $active aria-label="palette"><Icon name="palette" size={18} /></PaneTab>
            <PaneToggle aria-label="expand pane"><Icon name="dblPrev" size={14} /></PaneToggle>
            <PaneGrip />
            <RoundButton aria-label="collapse pane"><Icon name="dblPrev" size={14} /></RoundButton>
          </TaskPane>
        </Workspace>

        <StatusBar>
          <StatusMark /><StatusMark /><StatusMark />
          <span>正在编辑：零件</span>
          <StatusMark /><StatusMark /><StatusMark />
          <Icon name="help" size={18} />
        </StatusBar>

        <Taskbar>
          <QuickLaunch>
            <QuickButton aria-label="messenger"><Icon name="people" size={18} /></QuickButton>
            <QuickButton aria-label="solidworks"><Icon name="sw" size={18} /></QuickButton>
            <QuickButton aria-label="media player"><Icon name="media" size={18} /></QuickButton>
            <Chevron aria-label="more"><Icon name="dblNext" size={12} /></Chevron>
          </QuickLaunch>
          <TaskList>
            {tasks.map(([icon, label], i) => (
              <TaskButton key={i} $active={i === 0}>
                <Icon name={icon} size={18} />
                {label}
              </TaskButton>
            ))}
          </TaskList>
          <LanguageBar>
            <Icon name="keyboard" />
            <Icon name="helpBubble" />
            <Icon name="restore" />
          </LanguageBar>
          <Tray>
            <TrayToggle aria-label="show hidden icons"><Icon name="prev" size={14} /></TrayToggle>
            <TrayIcons>
              <Icon name="buddy" size={17} />
              <Icon name="shield" size={17} />
              <Icon name="network" size={17} />
            </TrayIcons>
            <Clock>12:59</Clock>
          </Tray>
        </Taskbar>
      </Window>
    </Page>
  );
}
